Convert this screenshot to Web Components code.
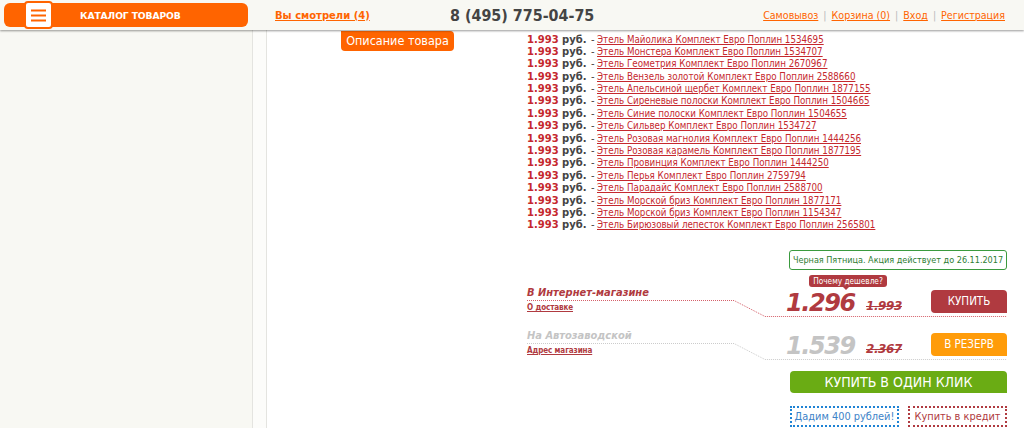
<!DOCTYPE html>
<html lang="ru"><head><meta charset="utf-8"><title>Каталог</title>
<style>
html,body{margin:0;height:428px;overflow:hidden;background:#f8f8f3}
body{font:10px "DejaVu Sans Condensed","DejaVu Sans",sans-serif;display:flex;flex-direction:column}
</style></head><body>
<site-header></site-header>
<page-body>
  <product-tab slot="tab">Описание товара</product-tab>
  <product-line>Этель Майолика Комплект Евро Поплин 1534695</product-line>
  <product-line>Этель Монстера Комплект Евро Поплин 1534707</product-line>
  <product-line>Этель Геометрия Комплект Евро Поплин 2670967</product-line>
  <product-line>Этель Вензель золотой Комплект Евро Поплин 2588660</product-line>
  <product-line>Этель Апельсиной щербет Комплект Евро Поплин 1877155</product-line>
  <product-line>Этель Сиреневые полоски Комплект Евро Поплин 1504665</product-line>
  <product-line>Этель Синие полоски Комплект Евро Поплин 1504655</product-line>
  <product-line>Этель Сильвер Комплект Евро Поплин 1534727</product-line>
  <product-line>Этель Розовая магнолия Комплект Евро Поплин 1444256</product-line>
  <product-line>Этель Розовая карамель Комплект Евро Поплин 1877195</product-line>
  <product-line>Этель Провинция Комплект Евро Поплин 1444250</product-line>
  <product-line>Этель Перья Комплект Евро Поплин 2759794</product-line>
  <product-line>Этель Парадайс Комплект Евро Поплин 2588700</product-line>
  <product-line>Этель Морской бриз Комплект Евро Поплин 1877171</product-line>
  <product-line>Этель Морской бриз Комплект Евро Поплин 1154347</product-line>
  <product-line>Этель Бирюзовый лепесток Комплект Евро Поплин 2565801</product-line>
  <buy-box slot="buy"></buy-box>
</page-body>
<script>
const WIDE='"DejaVu Sans",sans-serif';
const FONT='"DejaVu Sans Condensed","DejaVu Sans",sans-serif';
class SiteHeader extends HTMLElement{
constructor(){
  super();
  this.attachShadow({mode:'open'}).innerHTML=`<style>
:host{display:flex;align-items:center;height:30px;background:#f8f8f3;box-shadow:0 1px 2px rgba(0,0,0,.4);position:relative;z-index:2;font-family:${FONT};flex:none}
.cat{display:flex;align-items:center;width:244px;height:24px;margin:0 0 0 4px;background:#ff6400;border-radius:6px;color:#fff;position:relative;flex:none}
.burger{position:absolute;left:20px;top:-2px;width:29px;height:28px;box-sizing:border-box;background:#fff;border:2px solid #ff6400;border-radius:4px;display:flex;align-items:center;justify-content:center}
.cat b{margin-left:76px;font:bold 9.2px ${WIDE};letter-spacing:-.1px}
a{color:#ff6400;text-decoration:underline}
.seen{margin-left:27px;font:bold 10px ${WIDE};width:175px;flex:none}
.phone{font:bold 15.9px ${FONT};color:#444;flex:none}
nav{font-size:10.6px;display:flex;gap:5px;color:#bbb;margin-left:auto;padding-right:19px}
</style>
<div class="cat"><span class="burger"><svg width="15" height="13" viewBox="0 0 15 13"><path d="M0 1.5h15M0 6.5h15M0 11.5h15" stroke="#ff6400" stroke-width="2.2"/></svg></span><b>КАТАЛОГ ТОВАРОВ</b></div>
<a class="seen">Вы смотрели (4)</a>
<span class="phone">8 (495) 775-04-75</span>
<nav><a>Самовывоз</a>|<a>Корзина (0)</a>|<a>Вход</a>|<a>Регистрация</a></nav>`;
}
}
class PageBody extends HTMLElement{
constructor(){
  super();
  this.attachShadow({mode:'open'}).innerHTML=`<style>
:host{display:flex;flex:1;min-height:0;overflow:hidden}
.side{width:252px;flex:none}
.gap{width:15px;flex:none;background:#fcfcfa;border:solid #e4e4e0;border-width:0 1px;box-sizing:border-box}
main{flex:1;background:#fff;display:flex;min-width:0}
.left{width:260px;flex:none;padding:1px 0 0 74px;box-sizing:border-box}
.right{flex:1;min-width:0;padding:3.5px 17px 0 0}
.list{margin-bottom:18.1px}
</style>
<div class="side"></div><div class="gap"></div>
<main><div class="left"><slot name="tab"></slot></div>
<div class="right"><div class="list"><slot></slot></div><slot name="buy"></slot></div></main>`;
}
}
class ProductTab extends HTMLElement{
constructor(){
  super();
  this.attachShadow({mode:'open'}).innerHTML=`<style>
:host{display:inline-block;width:113px;height:20px;text-align:center;background:#ff6400;color:#fff;border-radius:0 4px 4px 4px;font:12.5px/20px ${FONT};white-space:nowrap}
</style><slot></slot>`;
}
}
class ProductLine extends HTMLElement{
constructor(){
  super();
  this.attachShadow({mode:'open'}).innerHTML=`<style>
:host{display:flex;height:12.4px;line-height:12.4px;font-family:${FONT};font-size:9.7px;white-space:nowrap}
.p{width:70px;flex:none;font:bold 10px/12.4px ${WIDE};color:#444}
.p i{font-style:normal;color:#c5282e}
.p s{text-decoration:none;font-weight:normal;margin-left:1px}
a{color:#c5282e;text-decoration:underline}
</style><span class="p"><i>1.993</i> руб. <s>-</s></span><a><slot></slot></a>`;
}
}
class PriceOffer extends HTMLElement{
constructor(){
  super();
  this.attachShadow({mode:'open'});
}
connectedCallback(){
  const muted=this.hasAttribute('muted');
  const line=muted?'#ccc':'#d5606a';
  this.shadowRoot.innerHTML=`<style>
:host{display:flex;height:38px;position:relative;font-family:${FONT}}
svg{position:absolute;left:0;top:0;pointer-events:none}
.info{width:259px;flex:none}
h4{margin:-3px 0 4px;font-size:11px;font-style:italic;font-weight:bold;line-height:12px;color:${muted?'#c4c4c4':'#b03a40'};height:12px;white-space:nowrap}
a{display:block;font-size:8px;font-weight:bold;color:#b03a40;text-decoration:underline;line-height:10px;letter-spacing:-.1px}
.price{width:80px;flex:none;font:italic bold 24px/27px ${WIDE};color:${muted?'#c4c4c4':'#b03a40'};letter-spacing:-1.4px}
.old{width:65px;flex:none;font:italic bold 12px/32px ${WIDE};color:#b03a40;text-decoration:line-through;letter-spacing:-.4px}
.btn{width:76px;height:23px;flex:none;background:${muted?'#ff9c0a':'#b03a40'};color:#fff;border-radius:4px 4px 0 4px;font-size:11.5px;line-height:23px;text-align:center}
</style>
<svg width="480" height="38"><path d="M0 10.5H207L238 26.5H480" fill="none" stroke="${line}" stroke-dasharray="1 1"/></svg>
<div class="info"><h4>${this.getAttribute('name')}</h4><a>${this.getAttribute('link')}</a></div>
<span class="price">${this.getAttribute('price')}</span><span class="old">${this.getAttribute('old')}</span>
<span class="btn">${this.getAttribute('action')}</span>`;
}
}
class BuyBox extends HTMLElement{
constructor(){
  super();
  this.attachShadow({mode:'open'}).innerHTML=`<style>
:host{display:block;font-family:${FONT};position:relative}
.note{margin-left:262px;width:218px;height:20px;box-sizing:border-box;border:1px solid #3a9a3e;border-radius:3px;color:#2e7d32;font-size:9px;line-height:18px;text-align:center;white-space:nowrap}
.hint{position:absolute;left:282px;top:25px;width:78px;height:12px;background:#b03a40;color:#fff;font-size:8.2px;line-height:12px;text-align:center;border-radius:3px;z-index:1;white-space:nowrap}
.hint:after{content:"";position:absolute;left:34px;top:12px;border:3px solid transparent;border-top-color:#b03a40;border-bottom:0}
.offers{margin-top:20px;display:flex;flex-direction:column;gap:5px}
.one{display:block;margin:0 0 0 263px;height:22px;background:#6aac14;border-radius:4px 4px 0 4px;color:#fff;font-size:14px;line-height:22px;text-align:center}
.row{display:flex;margin:13px 0 0 263px;gap:9px;font-size:10.9px;line-height:17px;text-align:center}
.row a{height:21px;box-sizing:border-box;border:2px dotted;white-space:nowrap}
.blue{width:109px;color:#3d83c8;border-color:#1f83d4!important}
.red{width:99px;color:#b03a40;border-color:#b03a40!important}
</style>
<div class="note">Черная Пятница. Акция действует до 26.11.2017</div>
<div class="hint">Почему дешевле?</div>
<div class="offers">
<price-offer name="В Интернет-магазине" link="О доставке" price="1.296" old="1.993" action="КУПИТЬ"></price-offer>
<price-offer muted name="На Автозаводской" link="Адрес магазина" price="1.539" old="2.367" action="В РЕЗЕРВ"></price-offer>
</div>
<a class="one">КУПИТЬ В ОДИН КЛИК</a>
<div class="row"><a class="blue">Дадим 400 рублей!</a><a class="red">Купить в кредит</a></div>`;
}
}
customElements.define('product-tab',ProductTab);
customElements.define('product-line',ProductLine);
customElements.define('price-offer',PriceOffer);
customElements.define('buy-box',BuyBox);
customElements.define('page-body',PageBody);
customElements.define('site-header',SiteHeader);
</script>
</body></html>
